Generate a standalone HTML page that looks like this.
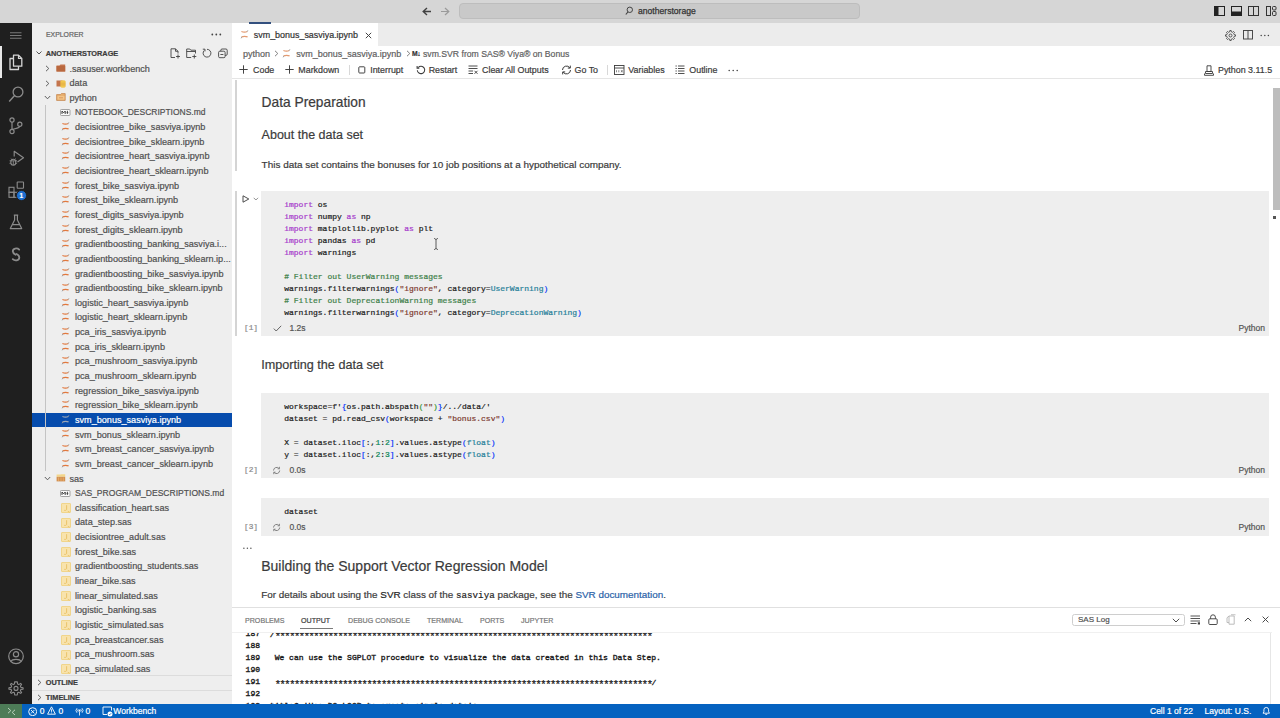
<!DOCTYPE html>
<html><head><meta charset="utf-8">
<style>
*{box-sizing:border-box;margin:0;padding:0}
html,body{width:1280px;height:718px;overflow:hidden;background:#fff}
.r{position:absolute}
.t{position:absolute;white-space:pre;-webkit-text-stroke:0.2px currentColor}
.s{font-family:"Liberation Sans",sans-serif}
.m{font-family:"Liberation Mono",monospace}
</style></head><body>
<div class="r" style="left:0px;top:0px;width:1280px;height:23px;background:#d6d6d6;"></div><svg class="r" style="left:422px;top:7px;" width="10" height="9" viewBox="0 0 10 9"><path d="M9 4.5H1.5M5 1L1.2 4.5L5 8" stroke="#404040" stroke-width="1.4" fill="none"/></svg><svg class="r" style="left:440px;top:7px;" width="10" height="9" viewBox="0 0 10 9"><path d="M1 4.5H8.5M5 1L8.8 4.5L5 8" stroke="#9a9a9a" stroke-width="1.2" fill="none"/></svg><div class="r" style="left:459px;top:3.0px;width:401px;height:16.3px;background:#c9c9c9;border:1px solid #bdbdbd;border-radius:4px"></div><svg class="r" style="left:625px;top:6px;" width="8" height="10" viewBox="0 0 8 10"><circle cx="4.8" cy="3.8" r="2.7" stroke="#444" stroke-width="1" fill="none"/><path d="M3 5.8L0.8 8.5" stroke="#444" stroke-width="1.1"/></svg><div class="t s" style="left:638.00px;top:7.32px;font-size:8.6px;line-height:8.6px;color:#333;font-weight:400;-webkit-text-stroke:0.25px #333;">anotherstorage</div><svg class="r" style="left:1214px;top:6px;" width="11" height="10" viewBox="0 0 11 10"><rect x="0.5" y="0.5" width="10" height="9" fill="none" stroke="#222"/><rect x="0.5" y="0.5" width="4" height="9" fill="#222"/></svg><svg class="r" style="left:1231px;top:6px;" width="11" height="10" viewBox="0 0 11 10"><rect x="0.5" y="0.5" width="10" height="9" fill="none" stroke="#222"/><rect x="0.5" y="5.5" width="10" height="4" fill="#222"/></svg><svg class="r" style="left:1248px;top:6px;" width="11" height="10" viewBox="0 0 11 10"><rect x="0.5" y="0.5" width="10" height="9" fill="none" stroke="#333"/><path d="M5.5 0.5V9.5" stroke="#333"/></svg><svg class="r" style="left:1266px;top:6px;" width="11" height="10" viewBox="0 0 11 10"><rect x="0.5" y="0.5" width="4" height="9" fill="none" stroke="#333"/><rect x="6.5" y="0.5" width="3.5" height="3.5" rx="1" fill="none" stroke="#333"/><rect x="6.5" y="5.5" width="3.5" height="4" rx="1" fill="none" stroke="#333"/></svg><div class="r" style="left:0px;top:23px;width:32px;height:681px;background:#1f1f1f;"></div><div class="r" style="left:0px;top:45.5px;width:2px;height:32.5px;background:#e8e8e8;"></div><svg class="r" style="left:10px;top:32px;" width="12" height="7" viewBox="0 0 12 7"><path d="M0 0.75H11.5M0 3.5H11.5M0 6.25H11.5" stroke="#7a7a7a" stroke-width="1"/></svg><svg class="r" style="left:8px;top:54px;" width="16" height="17" viewBox="0 0 16 17"><path d="M5.5 1.2H10.5L13.8 4.5V12.2H5.5Z" stroke="#d6d6d6" stroke-width="1.3" fill="none" stroke-linejoin="round"/><path d="M10.5 1.2V4.5H13.8" stroke="#d6d6d6" stroke-width="1.2" fill="none"/><path d="M5.5 4.5H2V15.5H10.5V12.2" stroke="#d6d6d6" stroke-width="1.3" fill="none" stroke-linejoin="round"/></svg><svg class="r" style="left:8px;top:86px;" width="16" height="17" viewBox="0 0 16 17"><circle cx="10" cy="6" r="4.9" stroke="#8b8b8b" stroke-width="1.3" fill="none"/><path d="M6.6 9.5L1.2 15.5" stroke="#8b8b8b" stroke-width="1.4"/></svg><svg class="r" style="left:9px;top:117px;" width="14" height="18" viewBox="0 0 14 18"><circle cx="3" cy="3" r="2.1" stroke="#8b8b8b" stroke-width="1.2" fill="none"/><circle cx="3" cy="14.5" r="2.1" stroke="#8b8b8b" stroke-width="1.2" fill="none"/><circle cx="10.8" cy="7.2" r="2.1" stroke="#8b8b8b" stroke-width="1.2" fill="none"/><path d="M3 5.1V12.4M10.8 9.3C10.8 11.5 6 11 3.5 12.6" stroke="#8b8b8b" stroke-width="1.2" fill="none"/></svg><svg class="r" style="left:8px;top:149.5px;" width="17" height="17" viewBox="0 0 17 17"><path d="M6.2 6.5V1.2L15.5 7.8L9.5 12" stroke="#8b8b8b" stroke-width="1.15" fill="none" stroke-linejoin="round"/><ellipse cx="5.3" cy="12.2" rx="2.5" ry="3" stroke="#8b8b8b" stroke-width="1.1" fill="#1f1f1f"/><path d="M1.6 10.8H9M2.8 8.6L3.8 9.5M7.8 8.6L6.8 9.5M1.5 13.3H2.8M7.8 13.3H9.1M5.3 10.8V15" stroke="#8b8b8b" stroke-width="0.9"/></svg><svg class="r" style="left:8px;top:181px;" width="17" height="18" viewBox="0 0 17 18"><rect x="1" y="6.3" width="5" height="5" stroke="#8b8b8b" stroke-width="1.1" fill="none"/><rect x="1" y="11.3" width="5" height="5" stroke="#8b8b8b" stroke-width="1.1" fill="none"/><rect x="6" y="11.3" width="5" height="5" stroke="#8b8b8b" stroke-width="1.1" fill="none"/><rect x="9.2" y="1" width="6.3" height="6.3" rx="0.6" stroke="#8b8b8b" stroke-width="1.1" fill="none"/></svg><div class="r" style="left:16.2px;top:190px;width:10.5px;height:10.5px;border-radius:50%;background:#1e6fd0;border:0.8px solid #1f1f1f"></div><div class="t s" style="left:19.40px;top:192.80px;font-size:6.5px;line-height:6.5px;color:#fff;font-weight:700;">1</div><svg class="r" style="left:9px;top:214px;" width="14" height="17" viewBox="0 0 14 17"><path d="M4.8 1.2H9.2M5.6 1.2V6L1.3 14.6H12.7L8.4 6V1.2M3.2 10.6H10.8" stroke="#8b8b8b" stroke-width="1.2" fill="none" stroke-linejoin="round"/></svg><svg class="r" style="left:9.5px;top:247px;" width="12" height="15" viewBox="0 0 12 15"><path d="M9.2 2.6C7.2 0.6 2.6 1.2 2.8 4.4C2.9 6 4.2 6.9 5.6 7.7" stroke="#8b8b8b" stroke-width="1.8" fill="none" stroke-linecap="round"/><path d="M6.6 7C8 7.8 9.4 8.8 9.3 10.6C9.2 13.6 4.8 14.2 2.8 12.2" stroke="#8b8b8b" stroke-width="1.8" fill="none" stroke-linecap="round"/></svg><svg class="r" style="left:8px;top:647.5px;" width="17" height="17" viewBox="0 0 17 17"><circle cx="8" cy="8.3" r="7.3" stroke="#8b8b8b" stroke-width="1.2" fill="none"/><circle cx="8" cy="6.3" r="2.6" stroke="#8b8b8b" stroke-width="1.2" fill="none"/><path d="M3.3 13.3C4 10.7 12 10.7 12.7 13.3" stroke="#8b8b8b" stroke-width="1.2" fill="none"/></svg><svg class="r" style="left:8px;top:680.5px;" width="16" height="16" viewBox="0 0 16 16"><path d="M8 0.8L9.3 0.9L9.6 3L10.8 3.6L12.6 2.4L13.6 3.3L12.4 5.1L12.9 6.4L15.1 6.7V8.1L12.9 8.4L12.4 9.7L13.6 11.5L12.6 12.4L10.8 11.2L9.6 11.8L9.3 14H6.7L6.4 11.8L5.2 11.2L3.4 12.4L2.4 11.5L3.6 9.7L3.1 8.4L0.9 8.1V6.7L3.1 6.4L3.6 5.1L2.4 3.3L3.4 2.4L5.2 3.6L6.4 3L6.7 0.9Z" stroke="#8b8b8b" stroke-width="1.1" fill="none" stroke-linejoin="round"/><circle cx="8" cy="7.4" r="2" stroke="#8b8b8b" stroke-width="1.1" fill="none"/></svg><div class="r" style="left:32px;top:23px;width:200px;height:681px;background:#eeeeee;"></div><div class="t s" style="left:45.75px;top:31.48px;font-size:7.7px;line-height:7.7px;color:#616161;font-weight:400;transform:scaleX(0.895);transform-origin:0 0;">EXPLORER</div><svg class="r" style="left:211px;top:33px;" width="11" height="3" viewBox="0 0 11 3"><circle cx="1.3" cy="1.5" r="0.9" fill="#444"/><circle cx="5.3" cy="1.5" r="0.9" fill="#444"/><circle cx="9.3" cy="1.5" r="0.9" fill="#444"/></svg><svg class="r" style="left:35.5px;top:50.5px;" width="6" height="4" viewBox="0 0 6 4"><path d="M0.5 0.5L3 3L5.5 0.5" stroke="#555" stroke-width="1" fill="none"/></svg><div class="t s" style="left:45.75px;top:49.78px;font-size:7.35px;line-height:7.35px;color:#3b3b3b;font-weight:700;">ANOTHERSTORAGE</div><svg class="r" style="left:170px;top:48px;" width="11" height="11" viewBox="0 0 11 11"><path d="M1 0.8H5.5L8 3.3V5.5M1 0.8V9.5H5M5.5 0.8V3.3H8" stroke="#424242" stroke-width="0.9" fill="none"/><path d="M8 6.5V10.5M6 8.5H10" stroke="#424242" stroke-width="0.9"/></svg><svg class="r" style="left:186px;top:48px;" width="11" height="11" viewBox="0 0 11 11"><path d="M0.7 1H3.8L4.8 2.2H9.5V5.5M0.7 1V9.5H5.2M0.7 3.5H9.5" stroke="#424242" stroke-width="0.9" fill="none"/><path d="M8.3 6.5V10.5M6.3 8.5H10.3" stroke="#424242" stroke-width="0.9"/></svg><svg class="r" style="left:202px;top:48px;" width="10" height="11" viewBox="0 0 10 11"><path d="M2.2 2.5A3.9 3.9 0 1 0 5 1.3" stroke="#424242" stroke-width="0.9" fill="none"/><path d="M0.8 1.2H3V3.4" stroke="#424242" stroke-width="0.9" fill="none"/></svg><svg class="r" style="left:217.5px;top:48px;" width="10" height="11" viewBox="0 0 10 11"><rect x="0.6" y="3.2" width="6.5" height="6.5" rx="1.2" stroke="#424242" stroke-width="0.9" fill="none"/><path d="M2.8 3.2V2.2C2.8 1.5 3.3 1 4 1H8C8.7 1 9.2 1.5 9.2 2.2V6.2C9.2 6.9 8.7 7.4 8 7.4H7.1M2.4 6.5H5.4" stroke="#424242" stroke-width="0.9" fill="none"/></svg><div class="r" style="left:32px;top:412.832px;width:200px;height:14.45px;background:#064cad;"></div><div class="r" style="left:45px;top:104.986px;width:1px;height:366.07499999999993px;background:#c4c4c4;"></div><svg class="r" style="left:45px;top:64.9px;" width="5" height="7" viewBox="0 0 5 7"><path d="M1 0.8L3.8 3.5L1 6.2" stroke="#555" stroke-width="0.95" fill="none"/></svg><svg class="r" style="left:55.5px;top:63.900000000000006px;" width="10" height="8" viewBox="0 0 10 8"><path d="M0.5 1.5H3.5L4.5 0.5H9.2V7.5H0.5Z" fill="#c4744c"/><rect x="0.5" y="2" width="8.7" height="5.5" fill="#b9683f"/></svg><div class="t s" style="left:69.50px;top:64.50px;font-size:9.1px;line-height:9.1px;color:#505050;font-weight:400;">.sasuser.workbench</div><svg class="r" style="left:45px;top:79.543px;" width="5" height="7" viewBox="0 0 5 7"><path d="M1 0.8L3.8 3.5L1 6.2" stroke="#555" stroke-width="0.95" fill="none"/></svg><svg class="r" style="left:55.5px;top:78.543px;" width="10" height="9" viewBox="0 0 10 9"><rect x="0.5" y="1.5" width="6" height="6" fill="#c4744c"/><ellipse cx="7" cy="2.5" rx="2.6" ry="1.2" fill="#f1c64f"/><rect x="4.4" y="2.5" width="5.2" height="5" fill="#f1c64f"/><ellipse cx="7" cy="7.5" rx="2.6" ry="1.2" fill="#f1c64f"/><path d="M4.5 4.2H9.6M4.5 5.9H9.6" stroke="#d99a3a" stroke-width="0.5"/></svg><div class="t s" style="left:69.50px;top:79.14px;font-size:9.1px;line-height:9.1px;color:#505050;font-weight:400;">data</div><svg class="r" style="left:43.5px;top:95.186px;" width="7" height="5" viewBox="0 0 7 5"><path d="M0.8 1L3.5 3.8L6.2 1" stroke="#555" stroke-width="0.95" fill="none"/></svg><svg class="r" style="left:55.5px;top:93.186px;" width="10" height="8" viewBox="0 0 10 8"><path d="M0.6 1.6H4.4L5.4 0.6H9.2V7.4H0.6Z" fill="#e8b070" stroke="#c08048" stroke-width="0.7"/><rect x="1.6" y="3" width="6.8" height="3.6" fill="#f2c488"/><path d="M3 4.8H7" stroke="#d9965a" stroke-width="0.9"/></svg><div class="t s" style="left:69.50px;top:93.78px;font-size:9.1px;line-height:9.1px;color:#505050;font-weight:400;">python</div><svg class="r" style="left:60px;top:108.82900000000001px;" width="11" height="7" viewBox="0 0 11 7"><rect x="0.5" y="0.5" width="9.5" height="6" rx="0.8" fill="#fafafa" stroke="#9a9a9a" stroke-width="0.9"/><path d="M2 4.9V2.1L3.6 3.7L5.2 2.1V4.9" stroke="#333" stroke-width="1" fill="none"/><path d="M7.4 1.8V4.2" stroke="#333" stroke-width="0.9"/><path d="M6.2 3.6H8.6L7.4 5.1Z" fill="#333"/></svg><div class="t s" style="left:75.00px;top:108.43px;font-size:9.1px;line-height:9.1px;color:#505050;font-weight:400;transform:scaleX(0.932);transform-origin:0 0;">NOTEBOOK_DESCRIPTIONS.md</div><svg class="r" style="left:61px;top:120.97200000000001px;" width="9" height="10" viewBox="0 0 9 10"><path d="M1.4 2.5Q4.5 3.6 7.4 2.5" stroke="#e2783d" stroke-width="1.2" fill="none"/><path d="M7 2.7L7.9 1.3" stroke="#9a9a9a" stroke-width="0.9"/><path d="M1.6 7.9Q4.5 6.8 7.6 7.9" stroke="#e2783d" stroke-width="1.2" fill="none"/><path d="M1.9 7.8L1.1 9.3" stroke="#9a9a9a" stroke-width="0.9"/></svg><div class="t s" style="left:75.00px;top:123.07px;font-size:9.1px;line-height:9.1px;color:#505050;font-weight:400;">decisiontree_bike_sasviya.ipynb</div><svg class="r" style="left:61px;top:135.615px;" width="9" height="10" viewBox="0 0 9 10"><path d="M1.4 2.5Q4.5 3.6 7.4 2.5" stroke="#e2783d" stroke-width="1.2" fill="none"/><path d="M7 2.7L7.9 1.3" stroke="#9a9a9a" stroke-width="0.9"/><path d="M1.6 7.9Q4.5 6.8 7.6 7.9" stroke="#e2783d" stroke-width="1.2" fill="none"/><path d="M1.9 7.8L1.1 9.3" stroke="#9a9a9a" stroke-width="0.9"/></svg><div class="t s" style="left:75.00px;top:137.71px;font-size:9.1px;line-height:9.1px;color:#505050;font-weight:400;">decisiontree_bike_sklearn.ipynb</div><svg class="r" style="left:61px;top:150.258px;" width="9" height="10" viewBox="0 0 9 10"><path d="M1.4 2.5Q4.5 3.6 7.4 2.5" stroke="#e2783d" stroke-width="1.2" fill="none"/><path d="M7 2.7L7.9 1.3" stroke="#9a9a9a" stroke-width="0.9"/><path d="M1.6 7.9Q4.5 6.8 7.6 7.9" stroke="#e2783d" stroke-width="1.2" fill="none"/><path d="M1.9 7.8L1.1 9.3" stroke="#9a9a9a" stroke-width="0.9"/></svg><div class="t s" style="left:75.00px;top:152.35px;font-size:9.1px;line-height:9.1px;color:#505050;font-weight:400;">decisiontree_heart_sasviya.ipynb</div><svg class="r" style="left:61px;top:164.901px;" width="9" height="10" viewBox="0 0 9 10"><path d="M1.4 2.5Q4.5 3.6 7.4 2.5" stroke="#e2783d" stroke-width="1.2" fill="none"/><path d="M7 2.7L7.9 1.3" stroke="#9a9a9a" stroke-width="0.9"/><path d="M1.6 7.9Q4.5 6.8 7.6 7.9" stroke="#e2783d" stroke-width="1.2" fill="none"/><path d="M1.9 7.8L1.1 9.3" stroke="#9a9a9a" stroke-width="0.9"/></svg><div class="t s" style="left:75.00px;top:167.00px;font-size:9.1px;line-height:9.1px;color:#505050;font-weight:400;">decisiontree_heart_sklearn.ipynb</div><svg class="r" style="left:61px;top:179.544px;" width="9" height="10" viewBox="0 0 9 10"><path d="M1.4 2.5Q4.5 3.6 7.4 2.5" stroke="#e2783d" stroke-width="1.2" fill="none"/><path d="M7 2.7L7.9 1.3" stroke="#9a9a9a" stroke-width="0.9"/><path d="M1.6 7.9Q4.5 6.8 7.6 7.9" stroke="#e2783d" stroke-width="1.2" fill="none"/><path d="M1.9 7.8L1.1 9.3" stroke="#9a9a9a" stroke-width="0.9"/></svg><div class="t s" style="left:75.00px;top:181.64px;font-size:9.1px;line-height:9.1px;color:#505050;font-weight:400;">forest_bike_sasviya.ipynb</div><svg class="r" style="left:61px;top:194.187px;" width="9" height="10" viewBox="0 0 9 10"><path d="M1.4 2.5Q4.5 3.6 7.4 2.5" stroke="#e2783d" stroke-width="1.2" fill="none"/><path d="M7 2.7L7.9 1.3" stroke="#9a9a9a" stroke-width="0.9"/><path d="M1.6 7.9Q4.5 6.8 7.6 7.9" stroke="#e2783d" stroke-width="1.2" fill="none"/><path d="M1.9 7.8L1.1 9.3" stroke="#9a9a9a" stroke-width="0.9"/></svg><div class="t s" style="left:75.00px;top:196.28px;font-size:9.1px;line-height:9.1px;color:#505050;font-weight:400;">forest_bike_sklearn.ipynb</div><svg class="r" style="left:61px;top:208.83px;" width="9" height="10" viewBox="0 0 9 10"><path d="M1.4 2.5Q4.5 3.6 7.4 2.5" stroke="#e2783d" stroke-width="1.2" fill="none"/><path d="M7 2.7L7.9 1.3" stroke="#9a9a9a" stroke-width="0.9"/><path d="M1.6 7.9Q4.5 6.8 7.6 7.9" stroke="#e2783d" stroke-width="1.2" fill="none"/><path d="M1.9 7.8L1.1 9.3" stroke="#9a9a9a" stroke-width="0.9"/></svg><div class="t s" style="left:75.00px;top:210.93px;font-size:9.1px;line-height:9.1px;color:#505050;font-weight:400;">forest_digits_sasviya.ipynb</div><svg class="r" style="left:61px;top:223.473px;" width="9" height="10" viewBox="0 0 9 10"><path d="M1.4 2.5Q4.5 3.6 7.4 2.5" stroke="#e2783d" stroke-width="1.2" fill="none"/><path d="M7 2.7L7.9 1.3" stroke="#9a9a9a" stroke-width="0.9"/><path d="M1.6 7.9Q4.5 6.8 7.6 7.9" stroke="#e2783d" stroke-width="1.2" fill="none"/><path d="M1.9 7.8L1.1 9.3" stroke="#9a9a9a" stroke-width="0.9"/></svg><div class="t s" style="left:75.00px;top:225.57px;font-size:9.1px;line-height:9.1px;color:#505050;font-weight:400;">forest_digits_sklearn.ipynb</div><svg class="r" style="left:61px;top:238.116px;" width="9" height="10" viewBox="0 0 9 10"><path d="M1.4 2.5Q4.5 3.6 7.4 2.5" stroke="#e2783d" stroke-width="1.2" fill="none"/><path d="M7 2.7L7.9 1.3" stroke="#9a9a9a" stroke-width="0.9"/><path d="M1.6 7.9Q4.5 6.8 7.6 7.9" stroke="#e2783d" stroke-width="1.2" fill="none"/><path d="M1.9 7.8L1.1 9.3" stroke="#9a9a9a" stroke-width="0.9"/></svg><div class="t s" style="left:75.00px;top:240.21px;font-size:9.1px;line-height:9.1px;color:#505050;font-weight:400;">gradientboosting_banking_sasviya.i...</div><svg class="r" style="left:61px;top:252.75900000000001px;" width="9" height="10" viewBox="0 0 9 10"><path d="M1.4 2.5Q4.5 3.6 7.4 2.5" stroke="#e2783d" stroke-width="1.2" fill="none"/><path d="M7 2.7L7.9 1.3" stroke="#9a9a9a" stroke-width="0.9"/><path d="M1.6 7.9Q4.5 6.8 7.6 7.9" stroke="#e2783d" stroke-width="1.2" fill="none"/><path d="M1.9 7.8L1.1 9.3" stroke="#9a9a9a" stroke-width="0.9"/></svg><div class="t s" style="left:75.00px;top:254.86px;font-size:9.1px;line-height:9.1px;color:#505050;font-weight:400;">gradientboosting_banking_sklearn.ip...</div><svg class="r" style="left:61px;top:267.40200000000004px;" width="9" height="10" viewBox="0 0 9 10"><path d="M1.4 2.5Q4.5 3.6 7.4 2.5" stroke="#e2783d" stroke-width="1.2" fill="none"/><path d="M7 2.7L7.9 1.3" stroke="#9a9a9a" stroke-width="0.9"/><path d="M1.6 7.9Q4.5 6.8 7.6 7.9" stroke="#e2783d" stroke-width="1.2" fill="none"/><path d="M1.9 7.8L1.1 9.3" stroke="#9a9a9a" stroke-width="0.9"/></svg><div class="t s" style="left:75.00px;top:269.50px;font-size:9.1px;line-height:9.1px;color:#505050;font-weight:400;">gradientboosting_bike_sasviya.ipynb</div><svg class="r" style="left:61px;top:282.045px;" width="9" height="10" viewBox="0 0 9 10"><path d="M1.4 2.5Q4.5 3.6 7.4 2.5" stroke="#e2783d" stroke-width="1.2" fill="none"/><path d="M7 2.7L7.9 1.3" stroke="#9a9a9a" stroke-width="0.9"/><path d="M1.6 7.9Q4.5 6.8 7.6 7.9" stroke="#e2783d" stroke-width="1.2" fill="none"/><path d="M1.9 7.8L1.1 9.3" stroke="#9a9a9a" stroke-width="0.9"/></svg><div class="t s" style="left:75.00px;top:284.14px;font-size:9.1px;line-height:9.1px;color:#505050;font-weight:400;">gradientboosting_bike_sklearn.ipynb</div><svg class="r" style="left:61px;top:296.688px;" width="9" height="10" viewBox="0 0 9 10"><path d="M1.4 2.5Q4.5 3.6 7.4 2.5" stroke="#e2783d" stroke-width="1.2" fill="none"/><path d="M7 2.7L7.9 1.3" stroke="#9a9a9a" stroke-width="0.9"/><path d="M1.6 7.9Q4.5 6.8 7.6 7.9" stroke="#e2783d" stroke-width="1.2" fill="none"/><path d="M1.9 7.8L1.1 9.3" stroke="#9a9a9a" stroke-width="0.9"/></svg><div class="t s" style="left:75.00px;top:298.78px;font-size:9.1px;line-height:9.1px;color:#505050;font-weight:400;">logistic_heart_sasviya.ipynb</div><svg class="r" style="left:61px;top:311.331px;" width="9" height="10" viewBox="0 0 9 10"><path d="M1.4 2.5Q4.5 3.6 7.4 2.5" stroke="#e2783d" stroke-width="1.2" fill="none"/><path d="M7 2.7L7.9 1.3" stroke="#9a9a9a" stroke-width="0.9"/><path d="M1.6 7.9Q4.5 6.8 7.6 7.9" stroke="#e2783d" stroke-width="1.2" fill="none"/><path d="M1.9 7.8L1.1 9.3" stroke="#9a9a9a" stroke-width="0.9"/></svg><div class="t s" style="left:75.00px;top:313.43px;font-size:9.1px;line-height:9.1px;color:#505050;font-weight:400;">logistic_heart_sklearn.ipynb</div><svg class="r" style="left:61px;top:325.97400000000005px;" width="9" height="10" viewBox="0 0 9 10"><path d="M1.4 2.5Q4.5 3.6 7.4 2.5" stroke="#e2783d" stroke-width="1.2" fill="none"/><path d="M7 2.7L7.9 1.3" stroke="#9a9a9a" stroke-width="0.9"/><path d="M1.6 7.9Q4.5 6.8 7.6 7.9" stroke="#e2783d" stroke-width="1.2" fill="none"/><path d="M1.9 7.8L1.1 9.3" stroke="#9a9a9a" stroke-width="0.9"/></svg><div class="t s" style="left:75.00px;top:328.07px;font-size:9.1px;line-height:9.1px;color:#505050;font-weight:400;">pca_iris_sasviya.ipynb</div><svg class="r" style="left:61px;top:340.61699999999996px;" width="9" height="10" viewBox="0 0 9 10"><path d="M1.4 2.5Q4.5 3.6 7.4 2.5" stroke="#e2783d" stroke-width="1.2" fill="none"/><path d="M7 2.7L7.9 1.3" stroke="#9a9a9a" stroke-width="0.9"/><path d="M1.6 7.9Q4.5 6.8 7.6 7.9" stroke="#e2783d" stroke-width="1.2" fill="none"/><path d="M1.9 7.8L1.1 9.3" stroke="#9a9a9a" stroke-width="0.9"/></svg><div class="t s" style="left:75.00px;top:342.71px;font-size:9.1px;line-height:9.1px;color:#505050;font-weight:400;">pca_iris_sklearn.ipynb</div><svg class="r" style="left:61px;top:355.26px;" width="9" height="10" viewBox="0 0 9 10"><path d="M1.4 2.5Q4.5 3.6 7.4 2.5" stroke="#e2783d" stroke-width="1.2" fill="none"/><path d="M7 2.7L7.9 1.3" stroke="#9a9a9a" stroke-width="0.9"/><path d="M1.6 7.9Q4.5 6.8 7.6 7.9" stroke="#e2783d" stroke-width="1.2" fill="none"/><path d="M1.9 7.8L1.1 9.3" stroke="#9a9a9a" stroke-width="0.9"/></svg><div class="t s" style="left:75.00px;top:357.36px;font-size:9.1px;line-height:9.1px;color:#505050;font-weight:400;">pca_mushroom_sasviya.ipynb</div><svg class="r" style="left:61px;top:369.903px;" width="9" height="10" viewBox="0 0 9 10"><path d="M1.4 2.5Q4.5 3.6 7.4 2.5" stroke="#e2783d" stroke-width="1.2" fill="none"/><path d="M7 2.7L7.9 1.3" stroke="#9a9a9a" stroke-width="0.9"/><path d="M1.6 7.9Q4.5 6.8 7.6 7.9" stroke="#e2783d" stroke-width="1.2" fill="none"/><path d="M1.9 7.8L1.1 9.3" stroke="#9a9a9a" stroke-width="0.9"/></svg><div class="t s" style="left:75.00px;top:372.00px;font-size:9.1px;line-height:9.1px;color:#505050;font-weight:400;">pca_mushroom_sklearn.ipynb</div><svg class="r" style="left:61px;top:384.54600000000005px;" width="9" height="10" viewBox="0 0 9 10"><path d="M1.4 2.5Q4.5 3.6 7.4 2.5" stroke="#e2783d" stroke-width="1.2" fill="none"/><path d="M7 2.7L7.9 1.3" stroke="#9a9a9a" stroke-width="0.9"/><path d="M1.6 7.9Q4.5 6.8 7.6 7.9" stroke="#e2783d" stroke-width="1.2" fill="none"/><path d="M1.9 7.8L1.1 9.3" stroke="#9a9a9a" stroke-width="0.9"/></svg><div class="t s" style="left:75.00px;top:386.64px;font-size:9.1px;line-height:9.1px;color:#505050;font-weight:400;">regression_bike_sasviya.ipynb</div><svg class="r" style="left:61px;top:399.18899999999996px;" width="9" height="10" viewBox="0 0 9 10"><path d="M1.4 2.5Q4.5 3.6 7.4 2.5" stroke="#e2783d" stroke-width="1.2" fill="none"/><path d="M7 2.7L7.9 1.3" stroke="#9a9a9a" stroke-width="0.9"/><path d="M1.6 7.9Q4.5 6.8 7.6 7.9" stroke="#e2783d" stroke-width="1.2" fill="none"/><path d="M1.9 7.8L1.1 9.3" stroke="#9a9a9a" stroke-width="0.9"/></svg><div class="t s" style="left:75.00px;top:401.29px;font-size:9.1px;line-height:9.1px;color:#505050;font-weight:400;">regression_bike_sklearn.ipynb</div><svg class="r" style="left:61px;top:413.832px;" width="9" height="10" viewBox="0 0 9 10"><path d="M1.4 2.5Q4.5 3.6 7.4 2.5" stroke="#9aa6b8" stroke-width="1.2" fill="none"/><path d="M7 2.7L7.9 1.3" stroke="#9a9a9a" stroke-width="0.9"/><path d="M1.6 7.9Q4.5 6.8 7.6 7.9" stroke="#9aa6b8" stroke-width="1.2" fill="none"/><path d="M1.9 7.8L1.1 9.3" stroke="#9a9a9a" stroke-width="0.9"/></svg><div class="t s" style="left:75.00px;top:415.93px;font-size:9.1px;line-height:9.1px;color:#ffffff;font-weight:400;">svm_bonus_sasviya.ipynb</div><svg class="r" style="left:61px;top:428.475px;" width="9" height="10" viewBox="0 0 9 10"><path d="M1.4 2.5Q4.5 3.6 7.4 2.5" stroke="#e2783d" stroke-width="1.2" fill="none"/><path d="M7 2.7L7.9 1.3" stroke="#9a9a9a" stroke-width="0.9"/><path d="M1.6 7.9Q4.5 6.8 7.6 7.9" stroke="#e2783d" stroke-width="1.2" fill="none"/><path d="M1.9 7.8L1.1 9.3" stroke="#9a9a9a" stroke-width="0.9"/></svg><div class="t s" style="left:75.00px;top:430.57px;font-size:9.1px;line-height:9.1px;color:#505050;font-weight:400;">svm_bonus_sklearn.ipynb</div><svg class="r" style="left:61px;top:443.11800000000005px;" width="9" height="10" viewBox="0 0 9 10"><path d="M1.4 2.5Q4.5 3.6 7.4 2.5" stroke="#e2783d" stroke-width="1.2" fill="none"/><path d="M7 2.7L7.9 1.3" stroke="#9a9a9a" stroke-width="0.9"/><path d="M1.6 7.9Q4.5 6.8 7.6 7.9" stroke="#e2783d" stroke-width="1.2" fill="none"/><path d="M1.9 7.8L1.1 9.3" stroke="#9a9a9a" stroke-width="0.9"/></svg><div class="t s" style="left:75.00px;top:445.21px;font-size:9.1px;line-height:9.1px;color:#505050;font-weight:400;">svm_breast_cancer_sasviya.ipynb</div><svg class="r" style="left:61px;top:457.76099999999997px;" width="9" height="10" viewBox="0 0 9 10"><path d="M1.4 2.5Q4.5 3.6 7.4 2.5" stroke="#e2783d" stroke-width="1.2" fill="none"/><path d="M7 2.7L7.9 1.3" stroke="#9a9a9a" stroke-width="0.9"/><path d="M1.6 7.9Q4.5 6.8 7.6 7.9" stroke="#e2783d" stroke-width="1.2" fill="none"/><path d="M1.9 7.8L1.1 9.3" stroke="#9a9a9a" stroke-width="0.9"/></svg><div class="t s" style="left:75.00px;top:459.86px;font-size:9.1px;line-height:9.1px;color:#505050;font-weight:400;">svm_breast_cancer_sklearn.ipynb</div><svg class="r" style="left:43.5px;top:475.904px;" width="7" height="5" viewBox="0 0 7 5"><path d="M0.8 1L3.5 3.8L6.2 1" stroke="#555" stroke-width="0.95" fill="none"/></svg><svg class="r" style="left:55.5px;top:474.404px;" width="10" height="8" viewBox="0 0 10 8"><path d="M0.6 0.6H4.4L5.4 0.2H9.2V2.8H0.6Z" fill="#f3d68a"/><rect x="0.6" y="2.8" width="8.6" height="4.6" fill="#d39050"/><path d="M2.5 3.5V7M5 3.5V7M7.3 3.5V7" stroke="#e8b070" stroke-width="0.8"/></svg><div class="t s" style="left:69.50px;top:474.50px;font-size:9.1px;line-height:9.1px;color:#505050;font-weight:400;">sas</div><svg class="r" style="left:60px;top:489.547px;" width="11" height="7" viewBox="0 0 11 7"><rect x="0.5" y="0.5" width="9.5" height="6" rx="0.8" fill="#fafafa" stroke="#9a9a9a" stroke-width="0.9"/><path d="M2 4.9V2.1L3.6 3.7L5.2 2.1V4.9" stroke="#333" stroke-width="1" fill="none"/><path d="M7.4 1.8V4.2" stroke="#333" stroke-width="0.9"/><path d="M6.2 3.6H8.6L7.4 5.1Z" fill="#333"/></svg><div class="t s" style="left:75.00px;top:489.14px;font-size:9.1px;line-height:9.1px;color:#505050;font-weight:400;transform:scaleX(0.94);transform-origin:0 0;">SAS_PROGRAM_DESCRIPTIONS.md</div><svg class="r" style="left:60.5px;top:503.19000000000005px;" width="10" height="10" viewBox="0 0 10 10"><rect x="0.5" y="0.5" width="9" height="9" rx="0.5" fill="#f8e3ad" stroke="#f0cf7a" stroke-width="0.8"/><path d="M5.6 2.2V6.3C5.6 7.3 4.6 7.6 3.2 7.3M6.8 8.3L8.6 9.2" stroke="#e9bf62" stroke-width="0.9" fill="none"/></svg><div class="t s" style="left:75.00px;top:503.79px;font-size:9.1px;line-height:9.1px;color:#505050;font-weight:400;">classification_heart.sas</div><svg class="r" style="left:60.5px;top:517.833px;" width="10" height="10" viewBox="0 0 10 10"><rect x="0.5" y="0.5" width="9" height="9" rx="0.5" fill="#f8e3ad" stroke="#f0cf7a" stroke-width="0.8"/><path d="M5.6 2.2V6.3C5.6 7.3 4.6 7.6 3.2 7.3M6.8 8.3L8.6 9.2" stroke="#e9bf62" stroke-width="0.9" fill="none"/></svg><div class="t s" style="left:75.00px;top:518.43px;font-size:9.1px;line-height:9.1px;color:#505050;font-weight:400;">data_step.sas</div><svg class="r" style="left:60.5px;top:532.476px;" width="10" height="10" viewBox="0 0 10 10"><rect x="0.5" y="0.5" width="9" height="9" rx="0.5" fill="#f8e3ad" stroke="#f0cf7a" stroke-width="0.8"/><path d="M5.6 2.2V6.3C5.6 7.3 4.6 7.6 3.2 7.3M6.8 8.3L8.6 9.2" stroke="#e9bf62" stroke-width="0.9" fill="none"/></svg><div class="t s" style="left:75.00px;top:533.07px;font-size:9.1px;line-height:9.1px;color:#505050;font-weight:400;">decisiontree_adult.sas</div><svg class="r" style="left:60.5px;top:547.119px;" width="10" height="10" viewBox="0 0 10 10"><rect x="0.5" y="0.5" width="9" height="9" rx="0.5" fill="#f8e3ad" stroke="#f0cf7a" stroke-width="0.8"/><path d="M5.6 2.2V6.3C5.6 7.3 4.6 7.6 3.2 7.3M6.8 8.3L8.6 9.2" stroke="#e9bf62" stroke-width="0.9" fill="none"/></svg><div class="t s" style="left:75.00px;top:547.72px;font-size:9.1px;line-height:9.1px;color:#505050;font-weight:400;">forest_bike.sas</div><svg class="r" style="left:60.5px;top:561.7620000000001px;" width="10" height="10" viewBox="0 0 10 10"><rect x="0.5" y="0.5" width="9" height="9" rx="0.5" fill="#f8e3ad" stroke="#f0cf7a" stroke-width="0.8"/><path d="M5.6 2.2V6.3C5.6 7.3 4.6 7.6 3.2 7.3M6.8 8.3L8.6 9.2" stroke="#e9bf62" stroke-width="0.9" fill="none"/></svg><div class="t s" style="left:75.00px;top:562.36px;font-size:9.1px;line-height:9.1px;color:#505050;font-weight:400;">gradientboosting_students.sas</div><svg class="r" style="left:60.5px;top:576.405px;" width="10" height="10" viewBox="0 0 10 10"><rect x="0.5" y="0.5" width="9" height="9" rx="0.5" fill="#f8e3ad" stroke="#f0cf7a" stroke-width="0.8"/><path d="M5.6 2.2V6.3C5.6 7.3 4.6 7.6 3.2 7.3M6.8 8.3L8.6 9.2" stroke="#e9bf62" stroke-width="0.9" fill="none"/></svg><div class="t s" style="left:75.00px;top:577.00px;font-size:9.1px;line-height:9.1px;color:#505050;font-weight:400;">linear_bike.sas</div><svg class="r" style="left:60.5px;top:591.048px;" width="10" height="10" viewBox="0 0 10 10"><rect x="0.5" y="0.5" width="9" height="9" rx="0.5" fill="#f8e3ad" stroke="#f0cf7a" stroke-width="0.8"/><path d="M5.6 2.2V6.3C5.6 7.3 4.6 7.6 3.2 7.3M6.8 8.3L8.6 9.2" stroke="#e9bf62" stroke-width="0.9" fill="none"/></svg><div class="t s" style="left:75.00px;top:591.64px;font-size:9.1px;line-height:9.1px;color:#505050;font-weight:400;">linear_simulated.sas</div><svg class="r" style="left:60.5px;top:605.691px;" width="10" height="10" viewBox="0 0 10 10"><rect x="0.5" y="0.5" width="9" height="9" rx="0.5" fill="#f8e3ad" stroke="#f0cf7a" stroke-width="0.8"/><path d="M5.6 2.2V6.3C5.6 7.3 4.6 7.6 3.2 7.3M6.8 8.3L8.6 9.2" stroke="#e9bf62" stroke-width="0.9" fill="none"/></svg><div class="t s" style="left:75.00px;top:606.29px;font-size:9.1px;line-height:9.1px;color:#505050;font-weight:400;">logistic_banking.sas</div><svg class="r" style="left:60.5px;top:620.334px;" width="10" height="10" viewBox="0 0 10 10"><rect x="0.5" y="0.5" width="9" height="9" rx="0.5" fill="#f8e3ad" stroke="#f0cf7a" stroke-width="0.8"/><path d="M5.6 2.2V6.3C5.6 7.3 4.6 7.6 3.2 7.3M6.8 8.3L8.6 9.2" stroke="#e9bf62" stroke-width="0.9" fill="none"/></svg><div class="t s" style="left:75.00px;top:620.93px;font-size:9.1px;line-height:9.1px;color:#505050;font-weight:400;">logistic_simulated.sas</div><svg class="r" style="left:60.5px;top:634.977px;" width="10" height="10" viewBox="0 0 10 10"><rect x="0.5" y="0.5" width="9" height="9" rx="0.5" fill="#f8e3ad" stroke="#f0cf7a" stroke-width="0.8"/><path d="M5.6 2.2V6.3C5.6 7.3 4.6 7.6 3.2 7.3M6.8 8.3L8.6 9.2" stroke="#e9bf62" stroke-width="0.9" fill="none"/></svg><div class="t s" style="left:75.00px;top:635.57px;font-size:9.1px;line-height:9.1px;color:#505050;font-weight:400;">pca_breastcancer.sas</div><svg class="r" style="left:60.5px;top:649.62px;" width="10" height="10" viewBox="0 0 10 10"><rect x="0.5" y="0.5" width="9" height="9" rx="0.5" fill="#f8e3ad" stroke="#f0cf7a" stroke-width="0.8"/><path d="M5.6 2.2V6.3C5.6 7.3 4.6 7.6 3.2 7.3M6.8 8.3L8.6 9.2" stroke="#e9bf62" stroke-width="0.9" fill="none"/></svg><div class="t s" style="left:75.00px;top:650.22px;font-size:9.1px;line-height:9.1px;color:#505050;font-weight:400;">pca_mushroom.sas</div><svg class="r" style="left:60.5px;top:664.263px;" width="10" height="10" viewBox="0 0 10 10"><rect x="0.5" y="0.5" width="9" height="9" rx="0.5" fill="#f8e3ad" stroke="#f0cf7a" stroke-width="0.8"/><path d="M5.6 2.2V6.3C5.6 7.3 4.6 7.6 3.2 7.3M6.8 8.3L8.6 9.2" stroke="#e9bf62" stroke-width="0.9" fill="none"/></svg><div class="t s" style="left:75.00px;top:664.86px;font-size:9.1px;line-height:9.1px;color:#505050;font-weight:400;">pca_simulated.sas</div><div class="r" style="left:32px;top:675px;width:200px;height:1px;background:#dcdcdc;"></div><svg class="r" style="left:36.5px;top:679.0px;" width="5" height="7" viewBox="0 0 5 7"><path d="M1 0.8L3.8 3.5L1 6.2" stroke="#555" stroke-width="0.95" fill="none"/></svg><div class="t s" style="left:45.75px;top:678.98px;font-size:7.35px;line-height:7.35px;color:#3b3b3b;font-weight:700;">OUTLINE</div><div class="r" style="left:32px;top:689.5px;width:200px;height:1px;background:#dcdcdc;"></div><svg class="r" style="left:36.5px;top:693.5px;" width="5" height="7" viewBox="0 0 5 7"><path d="M1 0.8L3.8 3.5L1 6.2" stroke="#555" stroke-width="0.95" fill="none"/></svg><div class="t s" style="left:45.75px;top:693.58px;font-size:7.35px;line-height:7.35px;color:#3b3b3b;font-weight:700;">TIMELINE</div><div class="r" style="left:232px;top:23px;width:1048px;height:22.5px;background:#ececec;"></div><div class="r" style="left:232px;top:23px;width:145.5px;height:22.5px;background:#ffffff;"></div><div class="r" style="left:248.8px;top:22.4px;width:22px;height:1.4px;background:#33507e;"></div><svg class="r" style="left:240px;top:29px;" width="9" height="10" viewBox="0 0 9 10"><path d="M1.4 2.5Q4.5 3.6 7.4 2.5" stroke="#e39a70" stroke-width="1.2" fill="none"/><path d="M7 2.7L7.9 1.3" stroke="#9a9a9a" stroke-width="0.9"/><path d="M1.6 7.9Q4.5 6.8 7.6 7.9" stroke="#e39a70" stroke-width="1.2" fill="none"/><path d="M1.9 7.8L1.1 9.3" stroke="#9a9a9a" stroke-width="0.9"/></svg><div class="t s" style="left:253.80px;top:30.64px;font-size:8.93px;line-height:8.93px;color:#333333;font-weight:400;">svm_bonus_sasviya.ipynb</div><svg class="r" style="left:364.5px;top:31.5px;" width="7" height="7" viewBox="0 0 7 7"><path d="M0.8 0.8L6.2 6.2M6.2 0.8L0.8 6.2" stroke="#444" stroke-width="1"/></svg><svg class="r" style="left:1224.5px;top:30px;" width="11" height="11" viewBox="0 0 11 11"><path d="M9.21 4.69L10.45 4.81L10.45 6.19L9.21 6.31L8.70 7.55L9.49 8.52L8.52 9.49L7.55 8.70L6.31 9.21L6.19 10.45L4.81 10.45L4.69 9.21L3.45 8.70L2.48 9.49L1.51 8.52L2.30 7.55L1.79 6.31L0.55 6.19L0.55 4.81L1.79 4.69L2.30 3.45L1.51 2.48L2.48 1.51L3.45 2.30L4.69 1.79L4.81 0.55L6.19 0.55L6.31 1.79L7.55 2.30L8.52 1.51L9.49 2.48L8.70 3.45Z" stroke="#444" stroke-width="0.9" fill="none" stroke-linejoin="round"/><circle cx="5.5" cy="5.5" r="1.5" stroke="#444" stroke-width="0.9" fill="none"/></svg><svg class="r" style="left:1242.5px;top:30px;" width="10" height="10" viewBox="0 0 10 10"><rect x="0.5" y="0.5" width="9" height="8.5" fill="none" stroke="#444" stroke-width="0.95"/><path d="M5 0.5V9" stroke="#444" stroke-width="0.95"/></svg><svg class="r" style="left:1260px;top:34px;" width="10" height="3" viewBox="0 0 10 3"><circle cx="1.2" cy="1.5" r="0.75" fill="#444"/><circle cx="4.8" cy="1.5" r="0.75" fill="#444"/><circle cx="8.4" cy="1.5" r="0.75" fill="#444"/></svg><div class="t s" style="left:243.00px;top:49.98px;font-size:9.0px;line-height:9.0px;color:#616161;font-weight:400;">python</div><svg class="r" style="left:273.5px;top:50.3px;" width="5" height="7" viewBox="0 0 5 7"><path d="M1 0.8L3.8 3.5L1 6.2" stroke="#777" stroke-width="0.95" fill="none"/></svg><svg class="r" style="left:282px;top:47.8px;" width="9" height="10" viewBox="0 0 9 10"><path d="M1.4 2.5Q4.5 3.6 7.4 2.5" stroke="#e39a70" stroke-width="1.2" fill="none"/><path d="M7 2.7L7.9 1.3" stroke="#9a9a9a" stroke-width="0.9"/><path d="M1.6 7.9Q4.5 6.8 7.6 7.9" stroke="#e39a70" stroke-width="1.2" fill="none"/><path d="M1.9 7.8L1.1 9.3" stroke="#9a9a9a" stroke-width="0.9"/></svg><div class="t s" style="left:296.20px;top:49.98px;font-size:9.0px;line-height:9.0px;color:#616161;font-weight:400;">svm_bonus_sasviya.ipynb</div><svg class="r" style="left:405.5px;top:50.3px;" width="5" height="7" viewBox="0 0 5 7"><path d="M1 0.8L3.8 3.5L1 6.2" stroke="#777" stroke-width="0.95" fill="none"/></svg><div class="t s" style="left:412.00px;top:51.44px;font-size:6.8px;line-height:6.8px;color:#333;font-weight:700;letter-spacing:-0.4px;">M↓</div><div class="t s" style="left:423.00px;top:49.98px;font-size:9.0px;line-height:9.0px;color:#616161;font-weight:400;transform:scaleX(0.962);transform-origin:0 0;">svm.SVR from SAS® Viya® on Bonus</div><svg class="r" style="left:239px;top:65.0px;" width="9" height="9" viewBox="0 0 9 9"><path d="M4.5 0.3V8.7M0.3 4.5H8.7" stroke="#3b3b3b" stroke-width="0.95"/></svg><div class="t s" style="left:253.10px;top:65.97px;font-size:8.9px;line-height:8.9px;color:#3b3b3b;font-weight:400;">Code</div><svg class="r" style="left:284.5px;top:65.0px;" width="9" height="9" viewBox="0 0 9 9"><path d="M4.5 0.3V8.7M0.3 4.5H8.7" stroke="#3b3b3b" stroke-width="0.95"/></svg><div class="t s" style="left:298.30px;top:65.97px;font-size:8.9px;line-height:8.9px;color:#3b3b3b;font-weight:400;">Markdown</div><div class="r" style="left:349px;top:64.5px;width:0.9px;height:10.5px;background:#d8d8d8;"></div><svg class="r" style="left:357.5px;top:65.5px;" width="8" height="8" viewBox="0 0 8 8"><rect x="0.8" y="0.8" width="6" height="6.2" rx="0.8" fill="none" stroke="#3b3b3b" stroke-width="0.95"/></svg><div class="t s" style="left:370.20px;top:65.97px;font-size:8.9px;line-height:8.9px;color:#3b3b3b;font-weight:400;">Interrupt</div><svg class="r" style="left:416px;top:65px;" width="10" height="10" viewBox="0 0 10 10"><path d="M2.2 2.5A3.7 3.7 0 1 1 1.3 5.2" stroke="#3b3b3b" stroke-width="1.05" fill="none"/><path d="M1.1 0.9V3.1H3.3" stroke="#3b3b3b" stroke-width="1.05" fill="none"/></svg><div class="t s" style="left:428.70px;top:65.97px;font-size:8.9px;line-height:8.9px;color:#3b3b3b;font-weight:400;">Restart</div><svg class="r" style="left:468px;top:65px;" width="11" height="10" viewBox="0 0 11 10"><path d="M0.5 1H9.5M0.5 3.5H9.5M0.5 6H5M0.5 8.5H5M6.5 5.8L9.5 8.8M9.5 5.8L6.5 8.8" stroke="#3b3b3b" stroke-width="0.9"/></svg><div class="t s" style="left:482.00px;top:65.97px;font-size:8.9px;line-height:8.9px;color:#3b3b3b;font-weight:400;">Clear All Outputs</div><svg class="r" style="left:561px;top:65px;" width="11" height="10" viewBox="0 0 11 10"><path d="M1.5 5A4 4 0 0 1 8.8 2.8M9.5 5A4 4 0 0 1 2.2 7.2" stroke="#3b3b3b" stroke-width="1" fill="none"/><path d="M9.3 0.6V3.1H6.8M1.7 9.4V6.9H4.2" stroke="#3b3b3b" stroke-width="1" fill="none"/></svg><div class="t s" style="left:574.50px;top:65.97px;font-size:8.9px;line-height:8.9px;color:#3b3b3b;font-weight:400;">Go To</div><div class="r" style="left:607px;top:64.5px;width:0.9px;height:10.5px;background:#d8d8d8;"></div><svg class="r" style="left:613.5px;top:65px;" width="11" height="10" viewBox="0 0 11 10"><rect x="0.5" y="0.5" width="9.5" height="9" fill="none" stroke="#3b3b3b" stroke-width="0.9"/><path d="M0.5 3H10" stroke="#3b3b3b" stroke-width="0.9"/><path d="M2.5 5.2V7.3M4.8 5.2V7.3M7.2 5.2L8.5 7.3M8.5 5.2L7.2 7.3" stroke="#3b3b3b" stroke-width="0.6"/></svg><div class="t s" style="left:628.30px;top:65.97px;font-size:8.9px;line-height:8.9px;color:#3b3b3b;font-weight:400;">Variables</div><svg class="r" style="left:674.5px;top:65px;" width="10" height="10" viewBox="0 0 10 10"><path d="M0.5 1H1.8M3 1H9.5M0.5 3.5H1.8M3 3.5H9.5M0.5 6H1.8M3 6H9.5M0.5 8.5H1.8M3 8.5H9.5" stroke="#3b3b3b" stroke-width="0.9"/></svg><div class="t s" style="left:689.30px;top:65.97px;font-size:8.9px;line-height:8.9px;color:#3b3b3b;font-weight:400;">Outline</div><svg class="r" style="left:728px;top:68.5px;" width="11" height="3" viewBox="0 0 11 3"><circle cx="1.2" cy="1.5" r="0.75" fill="#3b3b3b"/><circle cx="5.2" cy="1.5" r="0.75" fill="#3b3b3b"/><circle cx="9.2" cy="1.5" r="0.75" fill="#3b3b3b"/></svg><svg class="r" style="left:1203.5px;top:65px;" width="10" height="11" viewBox="0 0 10 11"><path d="M3 0.8H7V6.5H3Z M1.5 6.5H8.5V8.5H1.5Z M0.5 8.5V10.3H9.5V8.5" stroke="#3b3b3b" stroke-width="0.9" fill="none"/></svg><div class="t s" style="left:1218.00px;top:65.97px;font-size:8.9px;line-height:8.9px;color:#3b3b3b;font-weight:400;">Python 3.11.5</div><div class="r" style="left:232px;top:78px;width:1048px;height:1.2px;background:#e5e5e5;"></div><div class="r" style="left:232px;top:79.2px;width:1041px;height:528px;background:#ffffff;"></div><div class="r" style="left:235.3px;top:79.5px;width:1.3px;height:91px;background:#d4d4d4;"></div><div class="t s" style="left:261.60px;top:95.86px;font-size:13.75px;line-height:13.75px;color:#3b3b3b;font-weight:400;">Data Preparation</div><div class="t s" style="left:261.60px;top:129.42px;font-size:12.5px;line-height:12.5px;color:#3b3b3b;font-weight:400;">About the data set</div><div class="t s" style="left:261.60px;top:159.58px;font-size:9.95px;line-height:9.95px;color:#3b3b3b;font-weight:400;">This data set contains the bonuses for 10 job positions at a hypothetical company.</div><div class="r" style="left:235.3px;top:191px;width:1.3px;height:145px;background:#d4d4d4;"></div><div class="r" style="left:261px;top:191px;width:1008px;height:144.5px;background:#eeeeee;"></div><svg class="r" style="left:241.5px;top:194.5px;" width="8" height="8" viewBox="0 0 8 8"><path d="M1 0.8L6.8 4L1 7.2Z" stroke="#444" stroke-width="0.95" fill="none" stroke-linejoin="round"/></svg><svg class="r" style="left:253px;top:196.5px;" width="6" height="4" viewBox="0 0 6 4"><path d="M0.7 0.8L2.9 3L5.1 0.8" stroke="#777" stroke-width="0.8" fill="none"/></svg><div class="t m" style="left:284.20px;top:201.47px;font-size:8.0px;line-height:8.0px;color:#1a1a1a;font-weight:400;"><span style="color:#a73ccc">import</span><span style="color:#1a1a1a"> os</span></div><div class="t m" style="left:284.20px;top:213.47px;font-size:8.0px;line-height:8.0px;color:#1a1a1a;font-weight:400;"><span style="color:#a73ccc">import</span><span style="color:#1a1a1a"> numpy </span><span style="color:#a73ccc">as</span><span style="color:#1a1a1a"> np</span></div><div class="t m" style="left:284.20px;top:225.47px;font-size:8.0px;line-height:8.0px;color:#1a1a1a;font-weight:400;"><span style="color:#a73ccc">import</span><span style="color:#1a1a1a"> matplotlib.pyplot </span><span style="color:#a73ccc">as</span><span style="color:#1a1a1a"> plt</span></div><div class="t m" style="left:284.20px;top:237.47px;font-size:8.0px;line-height:8.0px;color:#1a1a1a;font-weight:400;"><span style="color:#a73ccc">import</span><span style="color:#1a1a1a"> pandas </span><span style="color:#a73ccc">as</span><span style="color:#1a1a1a"> pd</span></div><div class="t m" style="left:284.20px;top:249.47px;font-size:8.0px;line-height:8.0px;color:#1a1a1a;font-weight:400;"><span style="color:#a73ccc">import</span><span style="color:#1a1a1a"> warnings</span></div><div class="t m" style="left:284.20px;top:273.47px;font-size:8.0px;line-height:8.0px;color:#1a1a1a;font-weight:400;"><span style="color:#3d8048"># Filter out UserWarning messages</span></div><div class="t m" style="left:284.20px;top:285.47px;font-size:8.0px;line-height:8.0px;color:#1a1a1a;font-weight:400;"><span style="color:#1a1a1a">warnings.filterwarnings</span><span style="color:#0431fa">(</span><span style="color:#7d3a2e">&quot;ignore&quot;</span><span style="color:#1a1a1a">, category=</span><span style="color:#267f99">UserWarning</span><span style="color:#0431fa">)</span></div><div class="t m" style="left:284.20px;top:297.47px;font-size:8.0px;line-height:8.0px;color:#1a1a1a;font-weight:400;"><span style="color:#3d8048"># Filter out DeprecationWarning messages</span></div><div class="t m" style="left:284.20px;top:309.47px;font-size:8.0px;line-height:8.0px;color:#1a1a1a;font-weight:400;"><span style="color:#1a1a1a">warnings.filterwarnings</span><span style="color:#0431fa">(</span><span style="color:#7d3a2e">&quot;ignore&quot;</span><span style="color:#1a1a1a">, category=</span><span style="color:#267f99">DeprecationWarning</span><span style="color:#0431fa">)</span></div><div class="t m" style="left:244.00px;top:324.82px;font-size:7.8px;line-height:7.8px;color:#8a8a8a;font-weight:400;">[1]</div><svg class="r" style="left:272.5px;top:324.5px;" width="9" height="7" viewBox="0 0 9 7"><path d="M0.8 3.6L3.2 6L8.2 0.8" stroke="#555" stroke-width="0.9" fill="none"/></svg><div class="t s" style="left:289.50px;top:323.80px;font-size:8.5px;line-height:8.5px;color:#555;font-weight:400;">1.2s</div><div class="t s" style="left:1238.50px;top:323.80px;font-size:8.5px;line-height:8.5px;color:#555;font-weight:400;">Python</div><svg class="r" style="left:433px;top:238px;" width="6" height="12" viewBox="0 0 6 12"><path d="M1 0.5C2 0.5 3 1 3 2V10C3 11 2 11.5 1 11.5M5 0.5C4 0.5 3 1 3 2M5 11.5C4 11.5 3 11 3 10" stroke="#333" stroke-width="0.8" fill="none"/></svg><div class="t s" style="left:261.20px;top:358.81px;font-size:12.63px;line-height:12.63px;color:#3b3b3b;font-weight:400;">Importing the data set</div><div class="r" style="left:261px;top:393px;width:1008px;height:85.3px;background:#eeeeee;"></div><div class="t m" style="left:284.20px;top:403.47px;font-size:8.0px;line-height:8.0px;color:#1a1a1a;font-weight:400;"><span style="color:#1a1a1a">workspace=f&#x27;</span><span style="color:#0431fa">{</span><span style="color:#1a1a1a">os.path.abspath</span><span style="color:#319331">(</span><span style="color:#7d3a2e">&quot;&quot;</span><span style="color:#319331">)</span><span style="color:#0431fa">}</span><span style="color:#1a1a1a">/../data/&#x27;</span></div><div class="t m" style="left:284.20px;top:415.47px;font-size:8.0px;line-height:8.0px;color:#1a1a1a;font-weight:400;"><span style="color:#1a1a1a">dataset = pd.read_csv</span><span style="color:#0431fa">(</span><span style="color:#1a1a1a">workspace + </span><span style="color:#7d3a2e">&quot;bonus.csv&quot;</span><span style="color:#0431fa">)</span></div><div class="t m" style="left:284.20px;top:439.47px;font-size:8.0px;line-height:8.0px;color:#1a1a1a;font-weight:400;"><span style="color:#1a1a1a">X = dataset.iloc</span><span style="color:#0431fa">[</span><span style="color:#1a1a1a">:,</span><span style="color:#098658">1</span><span style="color:#1a1a1a">:</span><span style="color:#098658">2</span><span style="color:#0431fa">]</span><span style="color:#1a1a1a">.values.astype</span><span style="color:#0431fa">(</span><span style="color:#267f99">float</span><span style="color:#0431fa">)</span></div><div class="t m" style="left:284.20px;top:451.47px;font-size:8.0px;line-height:8.0px;color:#1a1a1a;font-weight:400;"><span style="color:#1a1a1a">y = dataset.iloc</span><span style="color:#0431fa">[</span><span style="color:#1a1a1a">:,</span><span style="color:#098658">2</span><span style="color:#1a1a1a">:</span><span style="color:#098658">3</span><span style="color:#0431fa">]</span><span style="color:#1a1a1a">.values.astype</span><span style="color:#0431fa">(</span><span style="color:#267f99">float</span><span style="color:#0431fa">)</span></div><div class="t m" style="left:244.00px;top:467.32px;font-size:7.8px;line-height:7.8px;color:#8a8a8a;font-weight:400;">[2]</div><svg class="r" style="left:272px;top:466px;" width="9" height="9" viewBox="0 0 9 9"><path d="M1.5 4.5A3.2 3.2 0 0 1 7.2 2.6M7.7 4.5A3.2 3.2 0 0 1 2 6.4" stroke="#777" stroke-width="0.9" fill="none"/><path d="M7.5 0.8V2.8H5.5M1.7 8.2V6.2H3.7" stroke="#777" stroke-width="0.8" fill="none"/></svg><div class="t s" style="left:289.50px;top:466.30px;font-size:8.5px;line-height:8.5px;color:#555;font-weight:400;">0.0s</div><div class="t s" style="left:1238.50px;top:466.30px;font-size:8.5px;line-height:8.5px;color:#555;font-weight:400;">Python</div><div class="r" style="left:261px;top:498.2px;width:1008px;height:37.4px;background:#eeeeee;"></div><div class="t m" style="left:284.20px;top:508.47px;font-size:8.0px;line-height:8.0px;color:#1a1a1a;font-weight:400;"><span style="color:#1a1a1a">dataset</span></div><div class="t m" style="left:244.00px;top:524.32px;font-size:7.8px;line-height:7.8px;color:#8a8a8a;font-weight:400;">[3]</div><svg class="r" style="left:272px;top:523px;" width="9" height="9" viewBox="0 0 9 9"><path d="M1.5 4.5A3.2 3.2 0 0 1 7.2 2.6M7.7 4.5A3.2 3.2 0 0 1 2 6.4" stroke="#777" stroke-width="0.9" fill="none"/><path d="M7.5 0.8V2.8H5.5M1.7 8.2V6.2H3.7" stroke="#777" stroke-width="0.8" fill="none"/></svg><div class="t s" style="left:289.50px;top:523.30px;font-size:8.5px;line-height:8.5px;color:#555;font-weight:400;">0.0s</div><div class="t s" style="left:1238.50px;top:523.30px;font-size:8.5px;line-height:8.5px;color:#555;font-weight:400;">Python</div><svg class="r" style="left:242.5px;top:546.5px;" width="9" height="2.5" viewBox="0 0 9 2.5"><circle cx="0.9" cy="1.2" r="0.75" fill="#555"/><circle cx="4.4" cy="1.2" r="0.75" fill="#555"/><circle cx="7.9" cy="1.2" r="0.75" fill="#555"/></svg><div class="t s" style="left:261.20px;top:559.35px;font-size:14.0px;line-height:14.0px;color:#3b3b3b;font-weight:400;">Building the Support Vector Regression Model</div><div class="t s" style="left:261.20px;top:590.02px;font-size:9.9px;line-height:9.9px;color:#3b3b3b;font-weight:400;">For details about using the <span style="color:#1f1f1f">SVR</span> class of the <span class="m" style="color:#1f1f1f;font-size:9.2px">sasviya</span> package, see the <span style="color:#2a62a8">SVR documentation</span>.</div><div class="r" style="left:1273.4px;top:87.5px;width:6.6px;height:122px;background:#bdbdbd;"></div><div class="r" style="left:1273.3px;top:215.9px;width:2.3px;height:3.3px;background:#555;"></div><div class="r" style="left:232px;top:607px;width:1048px;height:97px;background:#ffffff;"></div><div class="r" style="left:232px;top:606.5px;width:1048px;height:1.2px;background:#e0e0e0;"></div><div class="r" style="left:1270.3px;top:632px;width:0.9px;height:72px;background:#e6e6e6;"></div><div class="t m" style="left:245.60px;top:630.13px;font-size:8.05px;line-height:8.05px;color:#1a1a1a;font-weight:400;-webkit-text-stroke:0.35px #1a1a1a;">187</div><div class="t m" style="left:269.80px;top:630.13px;font-size:8.05px;line-height:8.05px;color:#1a1a1a;font-weight:400;-webkit-text-stroke:0.35px #1a1a1a;">/<span style="position:relative;top:2.6px;font-size:10.5px;letter-spacing:-1.47px;-webkit-text-stroke:0.25px #1f1f1f">******************************************************************************</span></div><div class="t m" style="left:245.60px;top:642.13px;font-size:8.05px;line-height:8.05px;color:#1a1a1a;font-weight:400;-webkit-text-stroke:0.35px #1a1a1a;">188</div><div class="t m" style="left:269.80px;top:642.13px;font-size:8.05px;line-height:8.05px;color:#1a1a1a;font-weight:400;-webkit-text-stroke:0.35px #1a1a1a;"></div><div class="t m" style="left:245.60px;top:654.13px;font-size:8.05px;line-height:8.05px;color:#1a1a1a;font-weight:400;-webkit-text-stroke:0.35px #1a1a1a;">189</div><div class="t m" style="left:269.80px;top:654.13px;font-size:8.05px;line-height:8.05px;color:#1a1a1a;font-weight:400;-webkit-text-stroke:0.35px #1a1a1a;"> We can use the SGPLOT procedure to visualize the data created in this Data Step.</div><div class="t m" style="left:245.60px;top:666.13px;font-size:8.05px;line-height:8.05px;color:#1a1a1a;font-weight:400;-webkit-text-stroke:0.35px #1a1a1a;">190</div><div class="t m" style="left:269.80px;top:666.13px;font-size:8.05px;line-height:8.05px;color:#1a1a1a;font-weight:400;-webkit-text-stroke:0.35px #1a1a1a;"></div><div class="t m" style="left:245.60px;top:678.13px;font-size:8.05px;line-height:8.05px;color:#1a1a1a;font-weight:400;-webkit-text-stroke:0.35px #1a1a1a;">191</div><div class="t m" style="left:269.80px;top:678.13px;font-size:8.05px;line-height:8.05px;color:#1a1a1a;font-weight:400;-webkit-text-stroke:0.35px #1a1a1a;"> <span style="position:relative;top:2.6px;font-size:10.5px;letter-spacing:-1.47px;-webkit-text-stroke:0.25px #1f1f1f">******************************************************************************</span>/</div><div class="t m" style="left:245.60px;top:690.13px;font-size:8.05px;line-height:8.05px;color:#1a1a1a;font-weight:400;-webkit-text-stroke:0.35px #1a1a1a;">192</div><div class="t m" style="left:269.80px;top:690.13px;font-size:8.05px;line-height:8.05px;color:#1a1a1a;font-weight:400;-webkit-text-stroke:0.35px #1a1a1a;"></div><div class="t m" style="left:245.60px;top:702.13px;font-size:8.05px;line-height:8.05px;color:#1a1a1a;font-weight:400;-webkit-text-stroke:0.35px #1a1a1a;">193</div><div class="t m" style="left:269.80px;top:702.13px;font-size:8.05px;line-height:8.05px;color:#1a1a1a;font-weight:400;-webkit-text-stroke:0.35px #1a1a1a;">title2 &#x27;Use DO LOOP to create single data&#x27;;</div><div class="r" style="left:232px;top:607.7px;width:1048px;height:24.3px;background:#ffffff;"></div><div class="t s" style="left:245.20px;top:616.81px;font-size:7.9px;line-height:7.9px;color:#767676;font-weight:400;transform:scaleX(0.9);transform-origin:0 0;">PROBLEMS</div><div class="t s" style="left:301.40px;top:616.81px;font-size:7.9px;line-height:7.9px;color:#3b3b3b;font-weight:400;transform:scaleX(0.9);transform-origin:0 0;">OUTPUT</div><div class="r" style="left:299.8px;top:627.5px;width:33.4px;height:1px;background:#7a7a7a;"></div><div class="t s" style="left:347.90px;top:616.81px;font-size:7.9px;line-height:7.9px;color:#767676;font-weight:400;transform:scaleX(0.9);transform-origin:0 0;">DEBUG CONSOLE</div><div class="t s" style="left:427.30px;top:616.81px;font-size:7.9px;line-height:7.9px;color:#767676;font-weight:400;transform:scaleX(0.9);transform-origin:0 0;">TERMINAL</div><div class="t s" style="left:480.30px;top:616.81px;font-size:7.9px;line-height:7.9px;color:#767676;font-weight:400;transform:scaleX(0.9);transform-origin:0 0;">PORTS</div><div class="t s" style="left:521.00px;top:616.81px;font-size:7.9px;line-height:7.9px;color:#767676;font-weight:400;transform:scaleX(0.9);transform-origin:0 0;">JUPYTER</div><div class="r" style="left:1072.4px;top:613.6px;width:112.2px;height:12px;background:#ffffff;border:0.9px solid #cecece;border-radius:2.5px"></div><div class="t s" style="left:1078.00px;top:616.03px;font-size:8.0px;line-height:8.0px;color:#505050;font-weight:400;">SAS Log</div><svg class="r" style="left:1172px;top:617.5px;" width="8" height="5" viewBox="0 0 8 5"><path d="M0.8 0.8L4 4L7.2 0.8" stroke="#444" stroke-width="0.95" fill="none"/></svg><svg class="r" style="left:1190px;top:614.5px;" width="11" height="10" viewBox="0 0 11 10"><path d="M0.5 1H10M0.5 3.5H10M0.5 6H10M0.5 8.5H6.5" stroke="#424242" stroke-width="0.9"/><rect x="7.8" y="7.3" width="2.2" height="2.2" fill="#424242"/></svg><svg class="r" style="left:1208px;top:613.5px;" width="10" height="11" viewBox="0 0 10 11"><rect x="0.8" y="4.8" width="8.4" height="5.7" rx="1" fill="none" stroke="#424242" stroke-width="0.95"/><path d="M2.6 4.8V3.2A2.4 2.4 0 0 1 7.4 3.2V4.8" stroke="#424242" stroke-width="0.95" fill="none"/></svg><svg class="r" style="left:1225.5px;top:613.5px;" width="11" height="11" viewBox="0 0 11 11"><path d="M3 2H8.2V10.2H3Z M3 2L1 3.8V8.5H3M5 0.8H9.5" stroke="#b5b5b5" stroke-width="0.9" fill="none"/></svg><svg class="r" style="left:1243.5px;top:616.5px;" width="8" height="5" viewBox="0 0 8 5"><path d="M0.8 4.2L4 1L7.2 4.2" stroke="#424242" stroke-width="0.95" fill="none"/></svg><svg class="r" style="left:1261.5px;top:615.5px;" width="7" height="7" viewBox="0 0 7 7"><path d="M0.6 0.6L6.4 6.4M6.4 0.6L0.6 6.4" stroke="#424242" stroke-width="0.95"/></svg><div class="r" style="left:232px;top:632px;width:1040px;height:0.8px;background:#f0f0f0;"></div><div class="r" style="left:0px;top:704px;width:1280px;height:14px;background:#0562c0;"></div><div class="r" style="left:0px;top:704px;width:22px;height:14px;background:#4d7c57;"></div><svg class="r" style="left:7px;top:706.5px;" width="9" height="9" viewBox="0 0 9 9"><path d="M1 1L3.8 3.6L1 6.2M8 2.8L5.2 5.4L8 8" stroke="#c8dcc8" stroke-width="0.9" fill="none"/></svg><svg class="r" style="left:27.8px;top:706.5px;" width="9.5" height="9.5" viewBox="0 0 9.5 9.5"><circle cx="4.7" cy="4.7" r="4" stroke="#ffffff" stroke-width="0.95" fill="none"/><path d="M3 3L6.4 6.4M6.4 3L3 6.4" stroke="#ffffff" stroke-width="0.9"/></svg><div class="t s" style="left:39.80px;top:707.10px;font-size:8.5px;line-height:8.5px;color:#ffffff;font-weight:400;">0</div><svg class="r" style="left:47.4px;top:706.3px;" width="9" height="9" viewBox="0 0 9 9"><path d="M4.5 0.8L8.4 8.2H0.6Z" stroke="#ffffff" stroke-width="0.9" fill="none" stroke-linejoin="round"/><path d="M4.5 3.3V5.8M4.5 6.6V7.3" stroke="#ffffff" stroke-width="0.9"/></svg><div class="t s" style="left:58.60px;top:707.10px;font-size:8.5px;line-height:8.5px;color:#ffffff;font-weight:400;">0</div><svg class="r" style="left:75px;top:706.5px;" width="9" height="9" viewBox="0 0 9 9"><circle cx="4.5" cy="3.5" r="1" fill="#ffffff"/><path d="M4.5 4.5V8.5M2 1.2A3.3 3.3 0 0 0 2 5.8M7 1.2A3.3 3.3 0 0 1 7 5.8M3.2 2.3A1.7 1.7 0 0 0 3.2 4.7M5.8 2.3A1.7 1.7 0 0 1 5.8 4.7" stroke="#ffffff" stroke-width="0.8" fill="none"/></svg><div class="t s" style="left:85.60px;top:707.10px;font-size:8.5px;line-height:8.5px;color:#ffffff;font-weight:400;">0</div><svg class="r" style="left:101.5px;top:706px;" width="11" height="11" viewBox="0 0 11 11"><path d="M5 8.5H1V1H9.5V4.5" stroke="#ffffff" stroke-width="0.9" fill="none"/><circle cx="8" cy="8" r="2.5" fill="#ffffff"/><path d="M6.9 8L7.7 8.8L9.2 7.2" stroke="#0562c0" stroke-width="0.8" fill="none"/></svg><div class="t s" style="left:113.30px;top:707.10px;font-size:8.5px;line-height:8.5px;color:#ffffff;font-weight:400;">Workbench</div><div class="t s" style="left:1150.00px;top:707.10px;font-size:8.5px;line-height:8.5px;color:#ffffff;font-weight:400;">Cell 1 of 22</div><div class="t s" style="left:1204.60px;top:707.10px;font-size:8.5px;line-height:8.5px;color:#ffffff;font-weight:400;">Layout: U.S.</div><svg class="r" style="left:1261.5px;top:706.3px;" width="8.5" height="9.5" viewBox="0 0 8.5 9.5"><path d="M1 7.2H7.5L6.6 5.8V3.8A2.35 2.35 0 0 0 1.9 3.8V5.8Z" stroke="#ffffff" stroke-width="0.9" fill="none" stroke-linejoin="round"/><path d="M3.3 8.4H5.2" stroke="#ffffff" stroke-width="0.9"/></svg></body></html>
